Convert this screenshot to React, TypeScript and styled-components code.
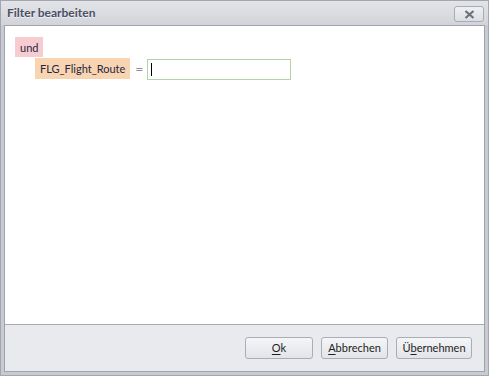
import React from "react";
import styled, { createGlobalStyle } from "styled-components";

const Global = createGlobalStyle`
  html, body { margin: 0; padding: 0; background: #ffffff; }
  body { font-family: Lato, "Noto Sans", "Liberation Sans", sans-serif; }
  * { box-sizing: border-box; }
`;

const Window = styled.div`
  width: 489px;
  height: 376px;
  border: 1px solid #a3a6b0;
  background: #c9cbd3;
  display: flex;
  flex-direction: column;
`;

const TitleBar = styled.div`
  height: 24px;
  flex: none;
  display: flex;
  align-items: flex-start;
  justify-content: space-between;
  padding: 0 4px 0 6px;
  background: linear-gradient(#e3e4e8, #d2d4da);
`;

const Title = styled.div`
  font-family: Lato, "Noto Sans", sans-serif;
  font-weight: 700;
  font-size: 12px;
  line-height: 24px;
  color: #4a5064;
  text-shadow: 0 1px 0 rgba(255, 255, 255, 0.6);
`;

const CloseButton = styled.button`
  margin-top: 5px;
  width: 30px;
  height: 16px;
  padding: 0;
  border: 1px solid #a9acb6;
  border-radius: 3px;
  background: linear-gradient(#eff0f3, #dcdee3);
  display: flex;
  align-items: center;
  justify-content: center;
`;

const Frame = styled.div`
  flex: 1;
  display: flex;
  padding: 0 3px 3px 3px;
`;

const Inner = styled.div`
  flex: 1;
  display: flex;
  flex-direction: column;
  border: 1px solid #a0a3ad;
`;

const Content = styled.div`
  flex: 1;
  background: #ffffff;
  padding: 11px 10px;
  display: flex;
  flex-direction: column;
  align-items: flex-start;
  gap: 1px;
`;

const Tag = styled.span<{ $bg: string }>`
  display: inline-flex;
  align-items: center;
  height: 20px;
  padding: 0 5px;
  background: ${(p) => p.$bg};
  color: #1f2745;
  font-size: 11px;
`;

const ConditionRow = styled.div`
  display: flex;
  align-items: flex-start;
  margin-left: 20px;
  height: 21px;
`;

const FieldTag = styled(Tag)`
  height: 21px;
  padding: 0 5px;
`;

const Operator = styled.span`
  color: #8c8f96;
  font-size: 14px;
  line-height: 21px;
  margin: 0 4px 0 5px;
`;

const ValueBox = styled.div`
  width: 144px;
  height: 21px;
  margin-top: 1px;
  border: 1px solid #b3d4a8;
  background: #fff;
  padding: 3px 3px;
`;

const Caret = styled.div`
  width: 1px;
  height: 13px;
  background: #000;
`;

const Footer = styled.div`
  height: 47px;
  flex: none;
  border-top: 1px solid #a7aab3;
  background: #e9eaee;
  display: flex;
  align-items: center;
  justify-content: flex-end;
  gap: 8px;
  padding: 0 12px 1px 0;
`;

const Button = styled.button<{ $w: number }>`
  width: ${(p) => p.$w}px;
  height: 22px;
  padding: 0;
  border: 1px solid #aaadb7;
  border-radius: 3px;
  background: linear-gradient(#f4f5f7, #e2e4e8);
  color: #1e1e24;
  font-family: Lato, "Noto Sans", sans-serif;
  font-size: 11px;
  line-height: 20px;
  white-space: nowrap;
  u { text-decoration: underline; text-underline-offset: 2px; }
`;

export default function App() {
  return (
    <>
      <Global />
      <Window>
        <TitleBar>
          <Title>Filter bearbeiten</Title>
          <CloseButton aria-label="Schließen">
            <svg width="11" height="9" viewBox="0 0 11 9">
              <path d="M1.5 1 L9.5 8 M9.5 1 L1.5 8" stroke="#6d717c" strokeWidth="2.2" />
            </svg>
          </CloseButton>
        </TitleBar>
        <Frame>
          <Inner>
            <Content>
              <Tag $bg="#f7ccd0">und</Tag>
              <ConditionRow>
                <FieldTag $bg="#f8d5b0">FLG_Flight_Route</FieldTag>
                <Operator>=</Operator>
                <ValueBox>
                  <Caret />
                </ValueBox>
              </ConditionRow>
            </Content>
            <Footer>
              <Button $w={68}><u>O</u>k</Button>
              <Button $w={67}><u>A</u>bbrechen</Button>
              <Button $w={76}>Ü<u>b</u>ernehmen</Button>
            </Footer>
          </Inner>
        </Frame>
      </Window>
    </>
  );
}
